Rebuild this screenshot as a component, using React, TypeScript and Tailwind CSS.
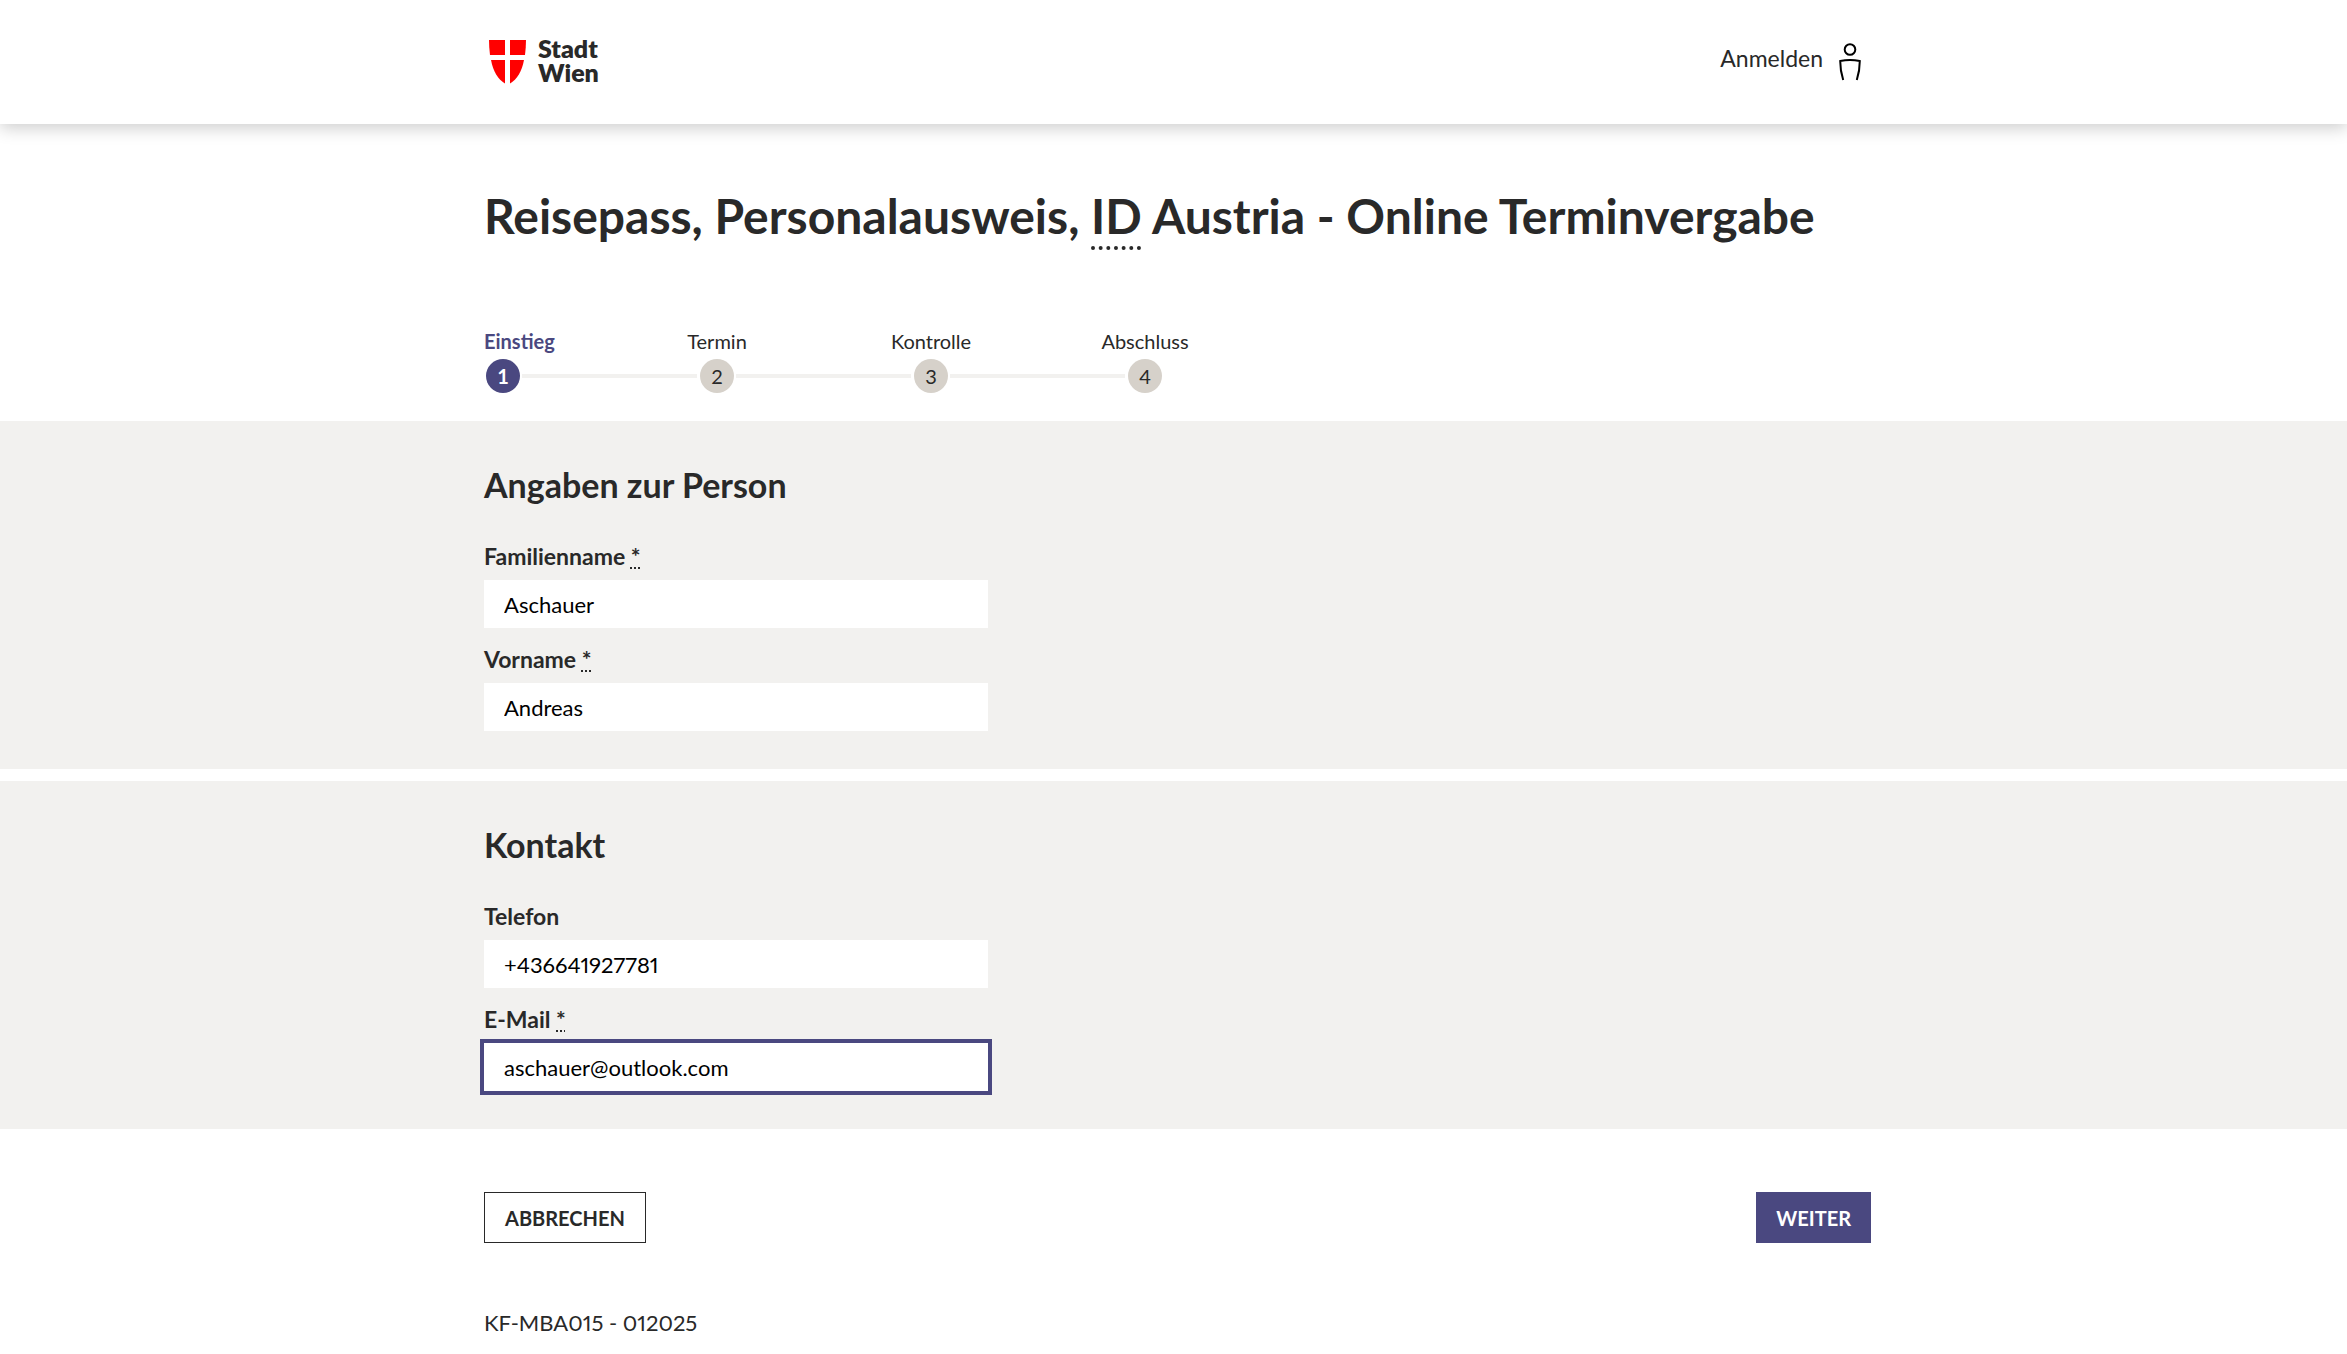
import { useState, type ReactNode } from "react";

function Container({ className = "", children }: { className?: string; children: ReactNode }) {
  return <div className={`mx-auto max-w-[1395px] pl-2 ${className}`}>{children}</div>;
}

function Logo() {
  return (
    <a href="#" aria-label="Stadt Wien" className="flex items-center gap-3 pl-[5px] text-[#292929]">
      <svg width="37" height="44" viewBox="0 0 37 44" fill="#ff0000" aria-hidden="true">
        <path d="M0 0H16V15H1C0.4 10 0 5 0 0Z" />
        <path d="M21 0H37C37 5 36.6 10 36 15H21Z" />
        <path d="M2 20H16V43.5C9 39.500 4 31 2 20Z" />
        <path d="M21 20H35C33 31 28 39.500 21 43.500Z" />
      </svg>
      <span className="flex flex-col pb-1 text-[25px] leading-6 font-extrabold">
        <span>Stadt</span>
        <span>Wien</span>
      </span>
    </a>
  );
}

function PersonIcon() {
  return (
    <svg width="22" height="38" viewBox="0 0 22 38" fill="none" stroke="#000" strokeWidth="2" aria-hidden="true">
      <circle cx="11" cy="6.500" r="5.300" />
      <path d="M4.200 37C2.300 31 1.200 25 1.200 18Q11 16 20.800 18C20.800 25 19.700 31 17.800 37" />
    </svg>
  );
}

const steps = ["Einstieg", "Termin", "Kontrolle", "Abschluss"];

function Stepper() {
  return (
    <ol className="flex pt-[83px] pb-7 text-[20px]">
      {steps.map((step, i) => (
        <li key={step} aria-current={i === 0 ? "step" : undefined} className={i < 3 ? "w-[214px]" : "w-[38px]"}>
          <div className={i === 0 ? "flex w-[38px] font-bold text-[#4a4880]" : "flex w-[38px] justify-center"}>
            <span className="leading-7">{step}</span>
          </div>
          <div className="flex items-center pt-1 pl-0.5">
            <span
              className={
                i === 0
                  ? "flex size-[34px] shrink-0 items-center justify-center rounded-full bg-[#4a4880] font-bold text-white"
                  : "flex size-[34px] shrink-0 items-center justify-center rounded-full bg-[#d6d1ca]"
              }
            >
              {i + 1}
            </span>
            {i < 3 && <span className="mr-px ml-0.5 h-1 grow bg-[#f2f1ef]" />}
          </div>
        </li>
      ))}
    </ol>
  );
}

type FieldProps = { id: string; label: string; type?: string; value: string; required?: boolean; active?: boolean };

function Field({ id, label, type = "text", value, required, active }: FieldProps) {
  const [text, setText] = useState(value);
  return (
    <div className="flex flex-col">
      <label htmlFor={id} className="pb-2 text-[23px] leading-8 font-bold">
        {label}{" "}
        {required && (
          <abbr title="Pflichtfeld" className="underline decoration-dotted decoration-2 underline-offset-2 [text-decoration-skip-ink:none]">
            *
          </abbr>
        )}
      </label>
      <input
        id={id}
        type={type}
        value={text}
        required={required}
        onChange={(e) => setText(e.target.value)}
        className={
          active
            ? "h-12 w-full bg-white px-5 text-[22px] text-black proportional-nums outline-4 outline-[#4a4880]"
            : "h-12 w-full bg-white px-5 text-[22px] text-black proportional-nums outline-[#4a4880] focus:outline-4"
        }
      />
    </div>
  );
}

function Section({ title, children }: { title: string; children: ReactNode }) {
  return (
    <section className="bg-[#f2f1ef] pt-11 pb-[38px]">
      <Container>
        <h2 className="text-[34px] leading-10 font-bold">{title}</h2>
        <div className="flex max-w-[504px] flex-col gap-[15px] pt-[35px]">{children}</div>
      </Container>
    </section>
  );
}

export default function App() {
  return (
    <div className="min-h-screen bg-white font-['Lato',sans-serif] text-[#292929]">
      <header className="shadow-[0_4px_16px_rgba(0,0,0,0.2)]">
        <Container className="flex h-[124px] items-center justify-between">
          <Logo />
          <a href="#" className="flex items-center gap-4 pr-[10px] text-[23px]">
            <span className="pb-2">Anmelden</span>
            <PersonIcon />
          </a>
        </Container>
      </header>
      <main>
        <Container>
          <h1 className="pt-16 text-[48px] leading-14 font-bold">
            Reisepass, Personalausweis,{" "}
            <abbr title="Identität" className="underline decoration-dotted decoration-4 underline-offset-[12px]">
              ID
            </abbr>{" "}
            Austria - Online Terminvergabe
          </h1>
          <Stepper />
        </Container>
        <form onSubmit={(e) => e.preventDefault()}>
          <div className="flex flex-col gap-3">
            <Section title="Angaben zur Person">
              <Field id="familienname" label="Familienname" value="Aschauer" required />
              <Field id="vorname" label="Vorname" value="Andreas" required />
            </Section>
            <Section title="Kontakt">
              <Field id="telefon" label="Telefon" type="tel" value="+436641927781" />
              <Field id="email" label="E-Mail" type="email" value="aschauer@outlook.com" required active />
            </Section>
          </div>
          <Container className="flex justify-between pt-[63px]">
            <button type="button" className="h-[51px] border border-[#292929] px-5 text-[20px] font-bold">
              ABBRECHEN
            </button>
            <button type="submit" className="h-[51px] bg-[#4a4880] px-5 text-[20px] font-bold text-white">
              WEITER
            </button>
          </Container>
        </form>
      </main>
      <footer>
        <Container className="pt-16">
          <p className="text-[22px] leading-8 proportional-nums">KF-MBA015 - 012025</p>
        </Container>
      </footer>
    </div>
  );
}
